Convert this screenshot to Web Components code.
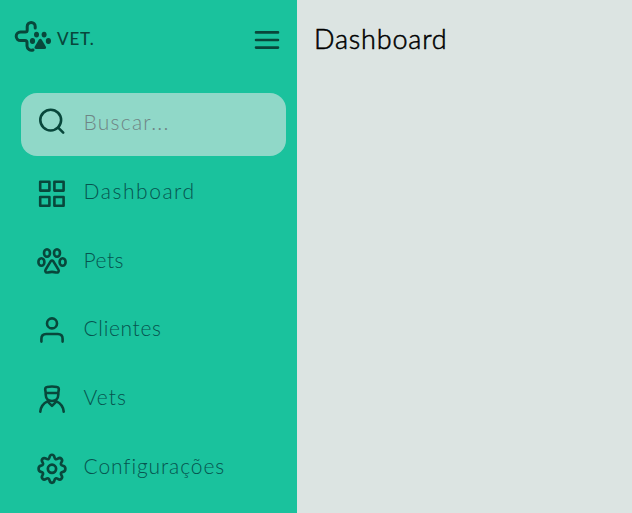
<!DOCTYPE html>
<html lang="pt-BR">
<head>
<meta charset="utf-8">
<title>VET.</title>
<style>
html,body{margin:0;height:100%;overflow:hidden}
body{font-family:Lato,"Open Sans",sans-serif;background:#dce4e2}
</style>
</head>
<body>
<vet-app></vet-app>
<script>
const icons = {
  logo: ['14 20 38 34', `<path stroke-width="3" d="M35.2 28V26.5a4 4 0 0 0-8 0V30a2 2 0 0 1-2 2H20.5a4.2 4.2 0 0 0 0 8.6H25a2 2 0 0 1 2 2V46a4.5 4.5 0 0 0 6 4"/><g fill="currentColor" stroke="none"><ellipse cx="32.5" cy="41" rx="2.6" ry="2.9"/><ellipse cx="36.5" cy="34.6" rx="2.5" ry="2.9"/><ellipse cx="44.1" cy="34.6" rx="2.5" ry="2.9"/><ellipse cx="48.4" cy="41" rx="2.6" ry="2.9"/><path d="M38.8 39.7q1.5-2 3 0l4.1 7q.8 2.2-1.6 2.2h-8q-2.4 0-1.6-2.2z"/></g>`],
  menu: ['0 0 26 20', `<path d="M2 2.4H24M2 10H24M2 17.6H24"/>`],
  search: ['0 0 32 32', `<circle cx="14.7" cy="14.1" r="10.4"/><path d="M22.2 21.6l5 5"/>`],
  grid: ['0 0 32 32', `<path d="M4.2 4.8h9.2v8.8H4.2zM18.4 4.8h9.2v8.8h-9.2zM4.2 20h9.2v8.8H4.2zM18.4 20h9.2v8.8h-9.2z"/>`],
  pets: ['0 0 32 32', `<ellipse cx="5.4" cy="17" rx="3" ry="3.8"/><ellipse cx="11" cy="8" rx="3" ry="3.8"/><ellipse cx="21" cy="8" rx="3" ry="3.8"/><ellipse cx="26.6" cy="17" rx="3" ry="3.8"/><path d="M14.6 16.3q1.4-1.7 2.8 0l5 8.3c1.2 2.1-.6 3.3-2.4 2.8q-4-1-8 0c-1.8.5-3.6-.7-2.4-2.8z"/>`],
  user: ['0 0 32 32', `<circle cx="16" cy="9.4" r="5"/><path d="M5.4 27.6V24.8q0-4.8 4.8-4.8H21.8q4.8 0 4.8 4.8V27.6"/>`],
  vet: ['0 0 32 32', `<path d="M9.2 6.5Q9.2 4.3 11 4Q16 3 21 4Q22.8 4.3 22.8 6.5L22.3 9.8V11.5C22.3 15.5 19.5 18 16 18S9.7 15.5 9.7 11.5V9.8ZM9.7 10H22.3M4.3 28.6Q5 21.5 11.5 18.4L16 22.9 20.5 18.4Q27 21.5 27.7 28.6"/>`],
  gear: ['0 0 32 32', `<g transform="translate(-.5 .3) scale(1.03)"><path d="M13.6 4.8c.6-3.2 4.2-3.2 4.8 0 .4 2 1.6 2.5 3.3 1.4 2.7-1.8 5.3.8 3.5 3.5-1.1 1.7-.6 2.9 1.4 3.3 3.2.6 3.2 5.4 0 6-2 .4-2.5 1.6-1.4 3.3 1.8 2.7-.8 5.3-3.5 3.5-1.7-1.1-2.9-.6-3.3 1.4-.6 3.2-4.2 3.2-4.8 0-.4-2-1.6-2.5-3.3-1.4-2.7 1.8-5.3-.8-3.5-3.5 1.1-1.7.6-2.9-1.4-3.3-3.2-.6-3.2-5.4 0-6 2-.4 2.5-1.6 1.4-3.3C5 7 7.6 4.4 10.3 6.2c1.7 1.1 2.9.6 3.3-1.4z"/><circle cx="16" cy="16" r="4"/></g>`]
};
class VetIcon extends HTMLElement {
  connectedCallback() {
    const [box, art] = icons[this.getAttribute('name')];
    const [, , w, h] = box.split(' ');
    this.attachShadow({mode:'open'}).innerHTML = `<style>:host{display:block;flex:none;width:${w}px;height:${h}px;color:#08473b}svg{display:block;overflow:visible;fill:none;stroke:currentColor;stroke-width:2.6;stroke-linecap:round;stroke-linejoin:round}</style><svg width="${w}" height="${h}" viewBox="${box}">${art}</svg>`;
  }
}
customElements.define('vet-icon', VetIcon);

class VetItem extends HTMLElement {
  connectedCallback() {
    this.attachShadow({mode:'open'}).innerHTML = `<style>
    :host{display:flex;box-sizing:border-box;height:63px;padding:13px 15px 0;gap:15.5px;font-size:21px;font-weight:300;line-height:32px;color:#06544f;white-space:nowrap}
    :host([search]){background:#90d8c8;border-radius:16px;color:#6f8585}
    :host(:not([search])) vet-icon{margin-top:1.8px}
    .label{letter-spacing:var(--track,.5px)}
    </style><vet-icon name="${this.getAttribute('icon')}"></vet-icon><span class="label"><slot></slot></span>`;
  }
}
customElements.define('vet-item', VetItem);

class VetSidebar extends HTMLElement {
  connectedCallback() {
    this.attachShadow({mode:'open'}).innerHTML = `<style>
    :host{display:block;box-sizing:border-box;width:297px;height:100%;background:#1ac29d}
    header{display:flex;box-sizing:border-box;height:93px;padding:20px 17px 0 14px}
    .brand{font-size:17px;font-weight:500;line-height:24px;letter-spacing:.8px;color:#08473b;margin:7px 0 0 5px}
    vet-icon[name=menu]{margin:10px 0 0 auto}
    nav{display:flex;flex-direction:column;gap:5.8px;padding:0 11px 0 21px}
    </style><header><vet-icon name="logo"></vet-icon><span class="brand">VET.</span><vet-icon name="menu"></vet-icon></header><nav><slot></slot></nav>`;
  }
}
customElements.define('vet-sidebar', VetSidebar);

class VetApp extends HTMLElement {
  connectedCallback() {
    this.attachShadow({mode:'open'}).innerHTML = `<style>
    :host{display:flex;height:100vh}
    main{flex:1;padding:22px 17px}
    h1{margin:0;font-size:27px;line-height:34px;font-weight:300;letter-spacing:.8px;color:#000;-webkit-text-stroke:.55px #000}
    </style><vet-sidebar>
    <vet-item search icon="search" style="--track:1.25px">Buscar...</vet-item>
    <vet-item icon="grid" style="--track:1.55px">Dashboard</vet-item>
    <vet-item icon="pets">Pets</vet-item>
    <vet-item icon="user" style="--track:.65px">Clientes</vet-item>
    <vet-item icon="vet" style="--track:1px">Vets</vet-item>
    <vet-item icon="gear" style="--track:.9px">Configurações</vet-item>
    </vet-sidebar><main><h1>Dashboard</h1></main>`;
  }
}
customElements.define('vet-app', VetApp);
</script>
</body>
</html>
